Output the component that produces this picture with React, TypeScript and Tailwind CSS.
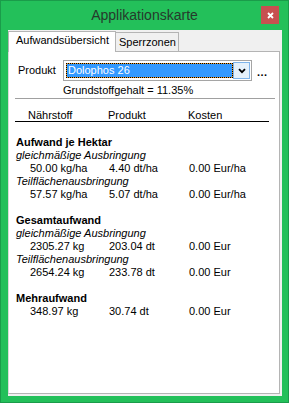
import React from "react";

const font = { fontFamily: '"Liberation Sans", Arial, sans-serif' };

function ValueRow({ a, b, c }: { a: string; b: string; c: string }) {
  return (
    <div className="flex h-[13px] leading-[13px] pl-[21px]">
      <div className="w-[79px] whitespace-nowrap">{a}</div>
      <div className="w-[80px] whitespace-nowrap">{b}</div>
      <div className="whitespace-nowrap">{c}</div>
    </div>
  );
}

function Heading({ children }: { children: React.ReactNode }) {
  return <div className="h-[13px] leading-[13px] pl-[7px] font-bold whitespace-nowrap">{children}</div>;
}

function Sub({ children }: { children: React.ReactNode }) {
  return <div className="h-[13px] leading-[13px] pl-[7px] italic whitespace-nowrap">{children}</div>;
}

function Blank() {
  return <div className="h-[13px]" />;
}

export default function App() {
  return (
    <div
      className="w-[289px] h-[403px] bg-[#23c05a] border border-[#1a9c4a] flex flex-col text-[11px] text-black"
      style={font}
    >
      {/* Title bar */}
      <div className="h-[29px] relative flex items-center justify-center shrink-0">
        <span className="text-[14px] text-[#263a2c] -mt-[1px]">Applikationskarte</span>
        <div className="absolute left-[260px] top-[5px] w-[18px] h-[18px] bg-[#c75050] flex items-center justify-center">
          <svg width="7" height="7" viewBox="0 0 7 7">
            <path d="M1 1 L6 6 M6 1 L1 6" stroke="white" strokeWidth="1.8" />
          </svg>
        </div>
      </div>

      {/* Client area */}
      <div className="flex-1 ml-[7px] mr-[6px] mb-[6px] bg-[#f0f0f0] pr-[2px] pb-[2px] flex flex-col">
        {/* Tabs */}
        <div className="h-[21px] flex items-end shrink-0">
          <div className="relative z-10 -mb-px h-[21px] w-[108px] bg-white border-t border-l border-r border-[#b4b4b4] pl-[7px] leading-[17px] whitespace-nowrap">
            Aufwandsübersicht
          </div>
          <div className="h-[19px] w-[63px] bg-[#f0f0f0] border-t border-r border-[#b4b4b4] pl-[3px] leading-[19px] whitespace-nowrap">
            Sperrzonen
          </div>
        </div>

        {/* Panel */}
        <div className="flex-1 bg-white border border-[#b4b4b4] border-l-[#dadada] flex flex-col">
          {/* Produkt row */}
          <div className="flex items-center h-[21px] mt-[8px] pl-[9px]">
            <div className="w-[45px] leading-[13px]">Produkt</div>
            <div className="w-[189px] h-[21px] border border-[#a5a5a5] bg-white flex items-center pl-[2px] pr-[1px]">
              <div className="w-[167px] h-[15px] bg-[#ee9c2c]">
                <div className="w-full h-full border border-dotted border-black bg-[#3399ff] bg-clip-padding text-white leading-[13px] pl-[1px] whitespace-nowrap">
                  Dolophos 26
                </div>
              </div>
              <div className="ml-auto w-[17px] h-[17px] bg-[#e5f1fb] border border-[#7eb4ea] flex items-center justify-center">
                <svg width="8" height="6" viewBox="0 0 8 6">
                  <path d="M1 1.2 L4 4.2 L7 1.2" fill="none" stroke="black" strokeWidth="1.8" />
                </svg>
              </div>
            </div>
            <div className="ml-[5px] font-bold leading-[13px] mt-[3px] tracking-[0.5px]">...</div>
          </div>

          {/* Grundstoffgehalt */}
          <div className="h-[13px] leading-[13px] mt-[3px] pl-[54px] whitespace-nowrap">Grundstoffgehalt = 11.35%</div>
          <div className="mt-[1px] ml-[6px] w-[260px] h-px bg-[#a0a0a0]" />

          {/* Header */}
          <div className="flex h-[11px] leading-[11px] mt-[11px] pl-[19px]">
            <div className="w-[80px]">Nährstoff</div>
            <div className="w-[80px]">Produkt</div>
            <div>Kosten</div>
          </div>
          <div className="ml-[6px] w-[254px] h-px bg-black" />

          <div className="mt-[14px] flex flex-col">
            <Heading>Aufwand je Hektar</Heading>
            <Sub>gleichmäßige Ausbringung</Sub>
            <ValueRow a="50.00 kg/ha" b="4.40 dt/ha" c="0.00 Eur/ha" />
            <Sub>Teilflächenausbringung</Sub>
            <ValueRow a="57.57 kg/ha" b="5.07 dt/ha" c="0.00 Eur/ha" />
            <Blank />
            <Heading>Gesamtaufwand</Heading>
            <Sub>gleichmäßige Ausbringung</Sub>
            <ValueRow a="2305.27 kg" b="203.04 dt" c="0.00 Eur" />
            <Sub>Teilflächenausbringung</Sub>
            <ValueRow a="2654.24 kg" b="233.78 dt" c="0.00 Eur" />
            <Blank />
            <Heading>Mehraufwand</Heading>
            <ValueRow a="348.97 kg" b="30.74 dt" c="0.00 Eur" />
          </div>
        </div>
      </div>
    </div>
  );
}
